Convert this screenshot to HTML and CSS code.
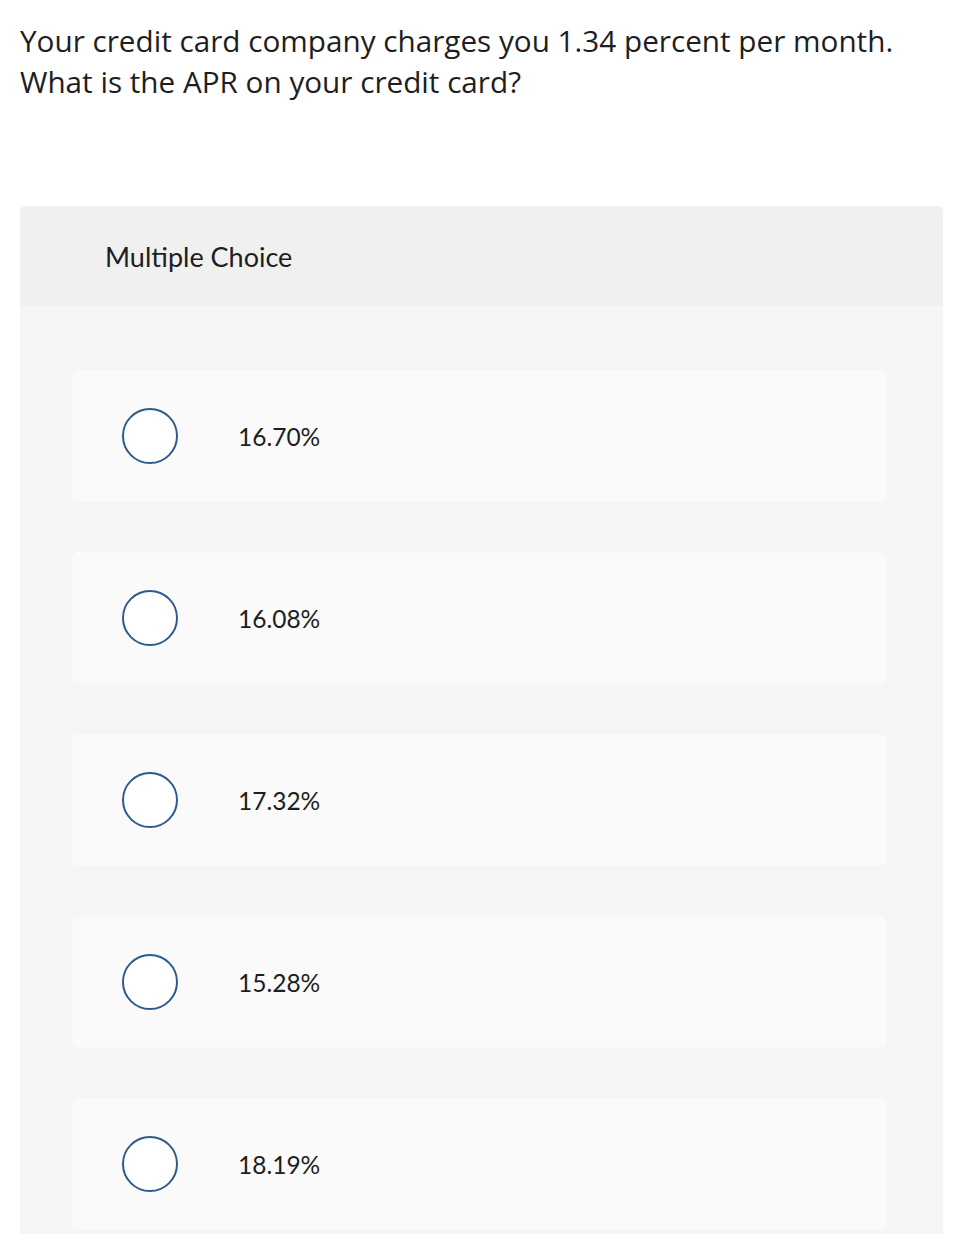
FILE: index.html
```html
<!DOCTYPE html>
<html>
<head>
<meta charset="utf-8">
<link rel="stylesheet" href="styles.css">
</head>
<body>
<div class="question">Your credit card company charges you 1.34 percent per month.<br>What is the APR on your credit card?</div>
<div class="card">
  <div class="card-header">Multiple Choice</div>
  <div class="card-body">
    <div class="option"><span class="radio"></span><span class="label">16.70%</span></div>
    <div class="option"><span class="radio"></span><span class="label">16.08%</span></div>
    <div class="option"><span class="radio"></span><span class="label">17.32%</span></div>
    <div class="option"><span class="radio"></span><span class="label">15.28%</span></div>
    <div class="option"><span class="radio"></span><span class="label">18.19%</span></div>
  </div>
</div>
</body>
</html>
```
FILE: styles.css
```css
html, body {
  margin: 0;
  padding: 0;
  background: #ffffff;
}
body {
  font-family: Lato, "Liberation Sans", sans-serif;
  color: #1e1e1e;
}
.question {
  padding: 20px 20px 0 20px;
  font-family: "Open Sans", "Liberation Sans", sans-serif;
  font-size: 29.7px;
  line-height: 41px;
  height: 82px;
  white-space: nowrap;
}
.card {
  margin: 104px 29px 0 20px;
  border-radius: 6px 6px 0 0;
  overflow: hidden;
  background: #f5f5f5;
}
.card-header {
  height: 100px;
  background: #f0f0f0;
  display: flex;
  align-items: center;
  padding-left: 85px;
  font-size: 27px;
}
.card-body {
  padding: 64px 56px 4px 52px;
  display: flex;
  flex-direction: column;
  gap: 50px;
}
.option {
  height: 132px;
  background: #fafafa;
  border-radius: 6px;
  display: flex;
  align-items: center;
  padding-left: 50px;
}
.radio {
  width: 52px;
  height: 52px;
  border: 2px solid #2f5b8c;
  border-radius: 50%;
  background: #ffffff;
  flex: none;
}
.label {
  margin-left: 60px;
  font-size: 24.5px;
  color: #1e1e1e;
}
```
